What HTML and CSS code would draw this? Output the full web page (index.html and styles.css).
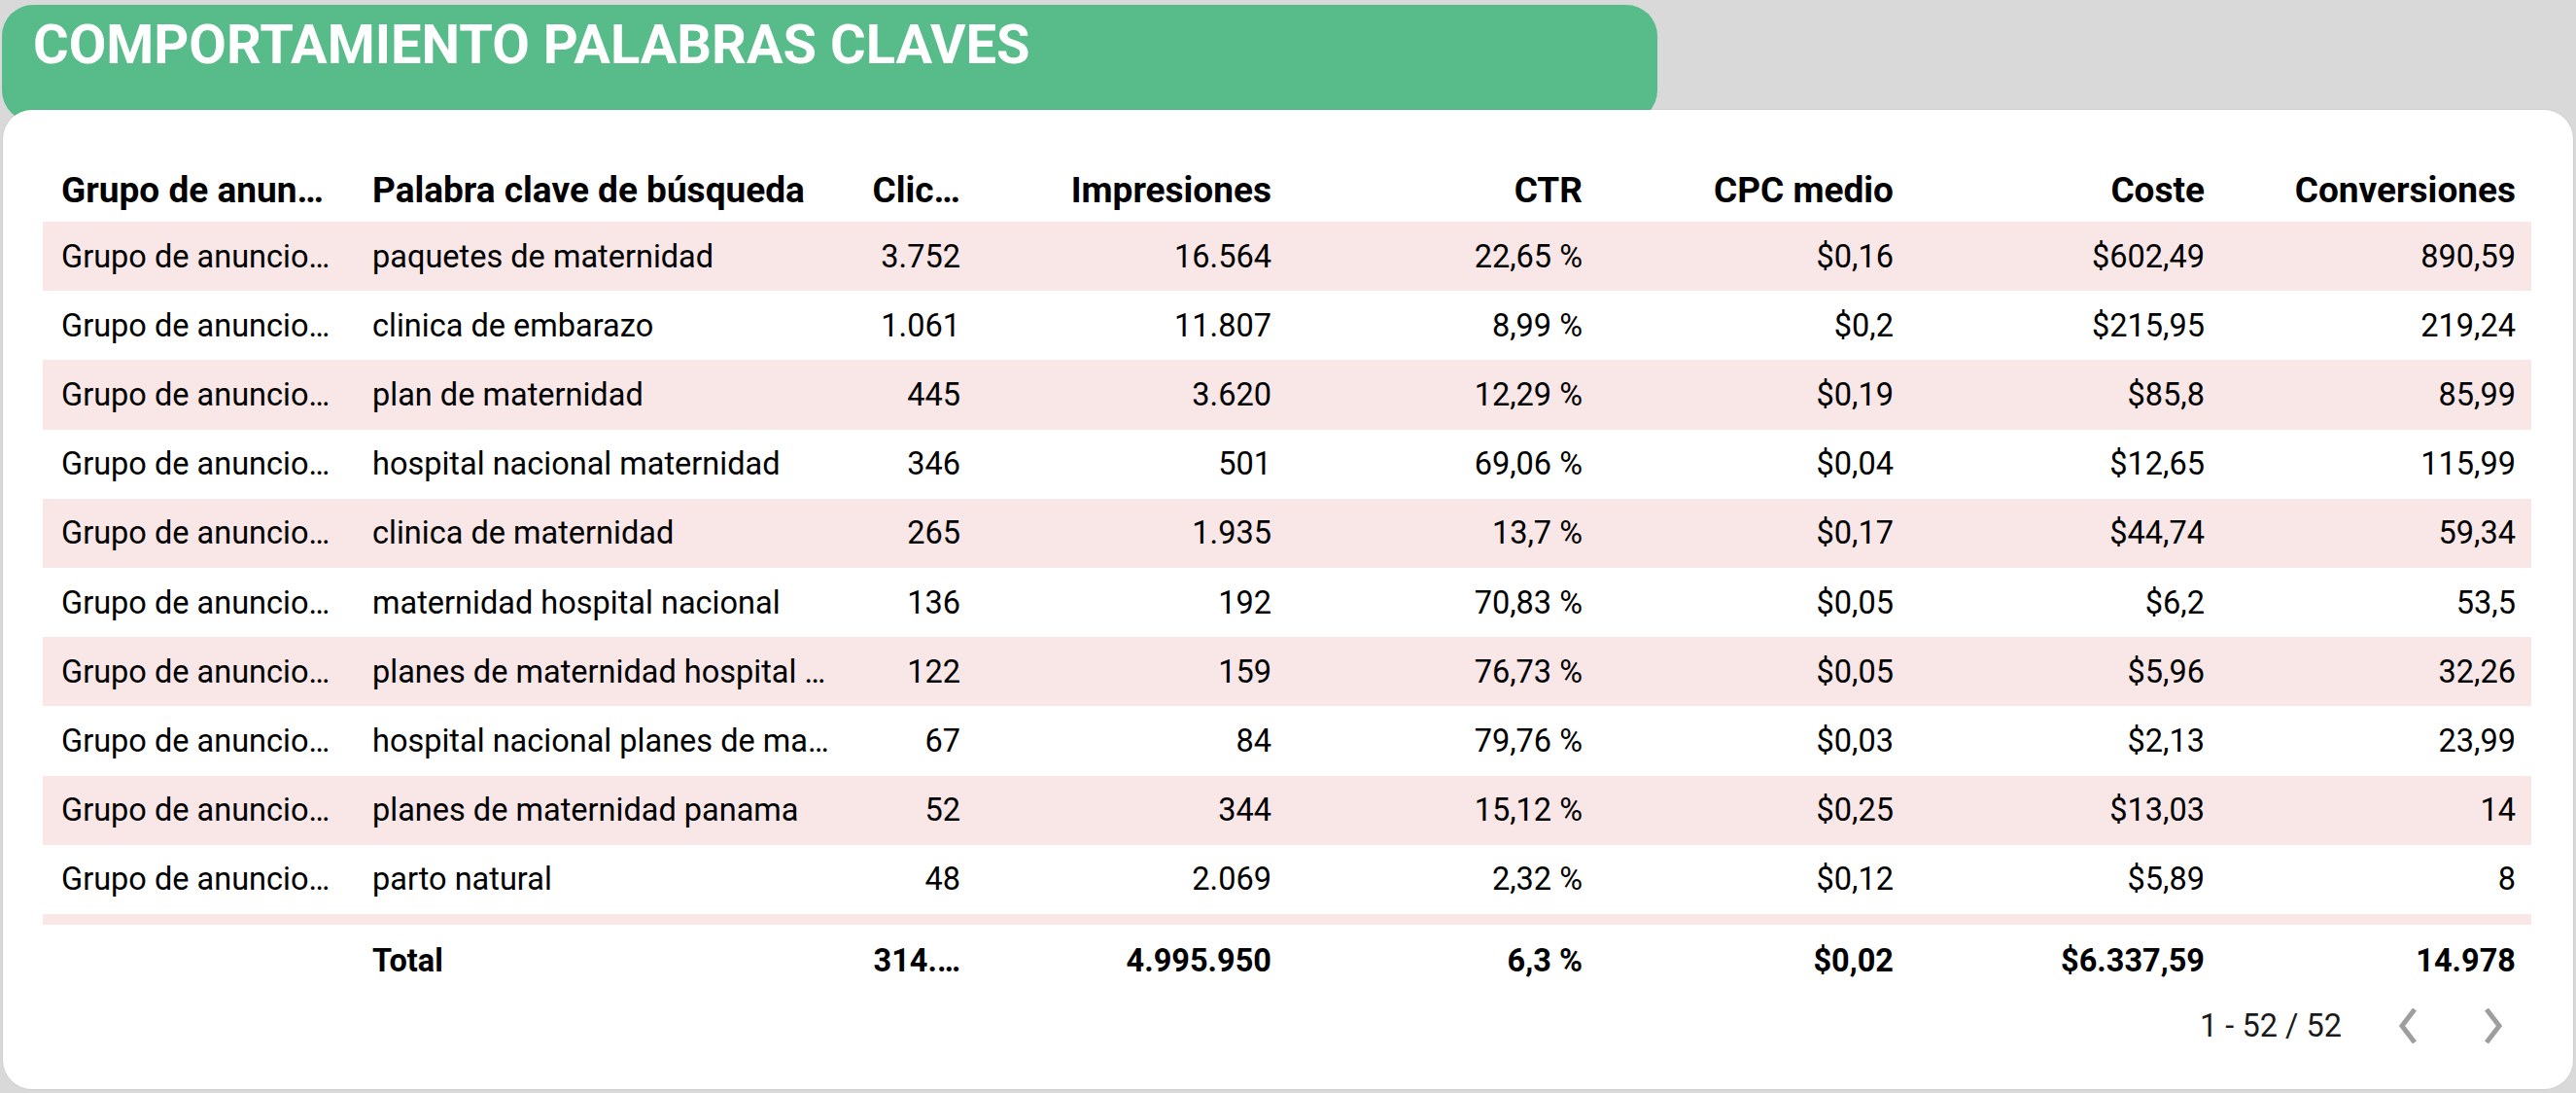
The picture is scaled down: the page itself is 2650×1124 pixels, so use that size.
FILE: index.html
```html
<!DOCTYPE html>
<html lang="es">
<head>
<meta charset="utf-8">
<title>Comportamiento palabras claves</title>
<link rel="stylesheet" href="styles.css">
</head>
<body>
<div class="page">
  <header class="title-bar">
    <h1 class="title">COMPORTAMIENTO PALABRAS CLAVES</h1>
  </header>
  <section class="card">
    <div class="table">
      <div class="row head">
        <div class="cell">Grupo de anun…</div>
        <div class="cell">Palabra clave de búsqueda</div>
        <div class="cell num">Clic…</div>
        <div class="cell num">Impresiones</div>
        <div class="cell num">CTR</div>
        <div class="cell num">CPC medio</div>
        <div class="cell num">Coste</div>
        <div class="cell num">Conversiones</div>
      </div>
      <div class="body">
        <div class="row stripe">
          <div class="cell">Grupo de anuncio…</div><div class="cell">paquetes de maternidad</div>
          <div class="cell num">3.752</div><div class="cell num">16.564</div><div class="cell num">22,65 %</div>
          <div class="cell num">$0,16</div><div class="cell num">$602,49</div><div class="cell num">890,59</div>
        </div>
        <div class="row">
          <div class="cell">Grupo de anuncio…</div><div class="cell">clinica de embarazo</div>
          <div class="cell num">1.061</div><div class="cell num">11.807</div><div class="cell num">8,99 %</div>
          <div class="cell num">$0,2</div><div class="cell num">$215,95</div><div class="cell num">219,24</div>
        </div>
        <div class="row stripe">
          <div class="cell">Grupo de anuncio…</div><div class="cell">plan de maternidad</div>
          <div class="cell num">445</div><div class="cell num">3.620</div><div class="cell num">12,29 %</div>
          <div class="cell num">$0,19</div><div class="cell num">$85,8</div><div class="cell num">85,99</div>
        </div>
        <div class="row">
          <div class="cell">Grupo de anuncio…</div><div class="cell">hospital nacional maternidad</div>
          <div class="cell num">346</div><div class="cell num">501</div><div class="cell num">69,06 %</div>
          <div class="cell num">$0,04</div><div class="cell num">$12,65</div><div class="cell num">115,99</div>
        </div>
        <div class="row stripe">
          <div class="cell">Grupo de anuncio…</div><div class="cell">clinica de maternidad</div>
          <div class="cell num">265</div><div class="cell num">1.935</div><div class="cell num">13,7 %</div>
          <div class="cell num">$0,17</div><div class="cell num">$44,74</div><div class="cell num">59,34</div>
        </div>
        <div class="row">
          <div class="cell">Grupo de anuncio…</div><div class="cell">maternidad hospital nacional</div>
          <div class="cell num">136</div><div class="cell num">192</div><div class="cell num">70,83 %</div>
          <div class="cell num">$0,05</div><div class="cell num">$6,2</div><div class="cell num">53,5</div>
        </div>
        <div class="row stripe">
          <div class="cell">Grupo de anuncio…</div><div class="cell">planes de maternidad hospital …</div>
          <div class="cell num">122</div><div class="cell num">159</div><div class="cell num">76,73 %</div>
          <div class="cell num">$0,05</div><div class="cell num">$5,96</div><div class="cell num">32,26</div>
        </div>
        <div class="row">
          <div class="cell">Grupo de anuncio…</div><div class="cell">hospital nacional planes de ma…</div>
          <div class="cell num">67</div><div class="cell num">84</div><div class="cell num">79,76 %</div>
          <div class="cell num">$0,03</div><div class="cell num">$2,13</div><div class="cell num">23,99</div>
        </div>
        <div class="row stripe">
          <div class="cell">Grupo de anuncio…</div><div class="cell">planes de maternidad panama</div>
          <div class="cell num">52</div><div class="cell num">344</div><div class="cell num">15,12 %</div>
          <div class="cell num">$0,25</div><div class="cell num">$13,03</div><div class="cell num">14</div>
        </div>
        <div class="row">
          <div class="cell">Grupo de anuncio…</div><div class="cell">parto natural</div>
          <div class="cell num">48</div><div class="cell num">2.069</div><div class="cell num">2,32 %</div>
          <div class="cell num">$0,12</div><div class="cell num">$5,89</div><div class="cell num">8</div>
        </div>
        <div class="row stripe"></div>
      </div>
      <div class="row total">
        <div class="cell"></div>
        <div class="cell">Total</div>
        <div class="cell num">314.…</div>
        <div class="cell num">4.995.950</div>
        <div class="cell num">6,3 %</div>
        <div class="cell num">$0,02</div>
        <div class="cell num">$6.337,59</div>
        <div class="cell num">14.978</div>
      </div>
    </div>
    <div class="pager">
      <span class="pager-text">1 - 52 / 52</span>
      <button class="pager-btn" type="button" aria-label="Página anterior">
        <svg class="chev" viewBox="0 0 20 36" width="20" height="36"><path d="M17 1 L4 18 L17 35"/></svg>
      </button>
      <button class="pager-btn" type="button" aria-label="Página siguiente">
        <svg class="chev" viewBox="0 0 20 36" width="20" height="36"><path d="M3 1 L16 18 L3 35"/></svg>
      </button>
    </div>
  </section>
</div>
</body>
</html>
```

FILE: styles.css
```css
* { box-sizing: border-box; }

html, body {
  margin: 0;
  padding: 0;
}

body {
  width: 2650px;
  height: 1124px;
  background: #d9d9d9;
  font-family: Roboto, "Liberation Sans", Arial, sans-serif;
  color: #000;
  overflow: hidden;
}

.page {
  padding: 5px 3px 0 2px;
}

.title-bar {
  width: 1703px;
  height: 120px;
  background: #57bb8a;
  border-radius: 32px;
  padding: 13px 0 0 32px;
}

.title {
  margin: 0;
  font-size: 56px;
  line-height: 56px;
  font-weight: 700;
  color: #fff;
}

.card {
  position: relative;
  margin-top: -12px;
  margin-left: 1px;
  width: 2644px;
  height: 1007px;
  background: #fff;
  border-radius: 30px;
  box-shadow: 0 0 0 1px rgba(0, 0, 0, 0.04);
  padding: 45px 0 0 41px;
}

.table {
  width: 2560px;
}

.row {
  display: grid;
  grid-template-columns: 320px 509px 131px repeat(5, 320px);
  align-items: center;
}

.body {
  height: 723px;
  overflow: hidden;
}

.body .row {
  height: 71.2px;
  font-size: 32.5px;
}

.stripe {
  background: #f9e6e7;
}

.cell {
  padding: 0 16px 0 19px;
  white-space: nowrap;
  overflow: hidden;
  text-overflow: clip;
}

.num {
  text-align: right;
}

.head {
  height: 70px;
  font-size: 37px;
  font-weight: 700;
}

.head .cell {
  padding-top: 4px;
}

.total {
  height: 70px;
  font-size: 32.5px;
  font-weight: 700;
}

.total .cell {
  padding-top: 3px;
}

.pager {
  display: flex;
  justify-content: flex-end;
  align-items: center;
  height: 68px;
  padding-right: 62px;
  gap: 48px;
}

.pager-text {
  font-size: 32.5px;
  color: #1a1a1a;
}

.pager-btn {
  display: flex;
  align-items: center;
  justify-content: center;
  width: 40px;
  height: 44px;
  padding: 0;
  border: 0;
  background: transparent;
}

.chev path {
  fill: none;
  stroke: #9e9e9e;
  stroke-width: 5;
}
```
